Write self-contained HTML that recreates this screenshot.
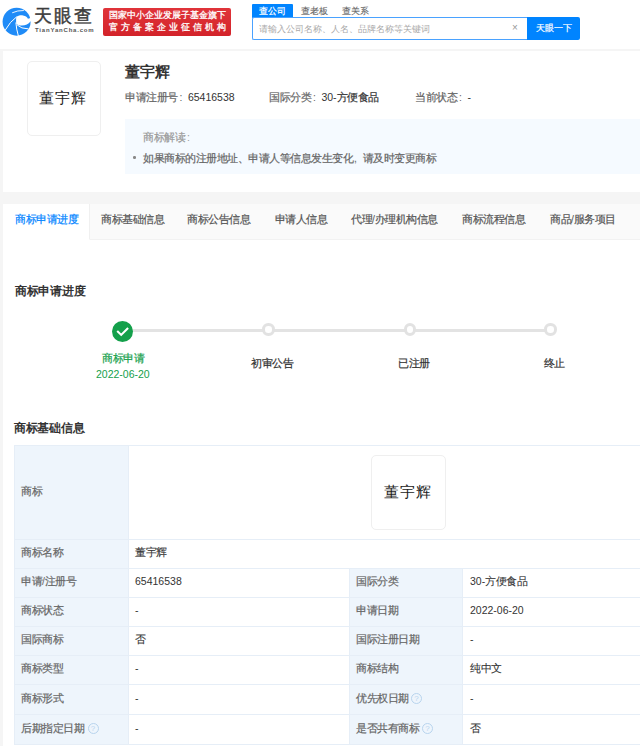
<!DOCTYPE html>
<html><head><meta charset="utf-8">
<style>
*{margin:0;padding:0;box-sizing:border-box}
html,body{width:640px;height:746px;overflow:hidden;background:#f5f5f5;font-family:"Liberation Sans",sans-serif;color:#333}
.abs{position:absolute;white-space:nowrap}
.t{font-size:10.5px;line-height:12px;letter-spacing:-0.5px;-webkit-text-stroke:0.2px currentColor}
.v{-webkit-text-stroke:0.1px currentColor}
.n{letter-spacing:0;-webkit-text-stroke:0}
.h9{font-size:9px;line-height:12px;-webkit-text-stroke:0.2px currentColor}
.bar{position:absolute;background:#e6eef7}
.lab{position:absolute;background:#eef5fc}
</style></head><body>
<!-- header -->
<div class="abs" style="left:0;top:0;width:640px;height:49px;background:#fff"></div>
<svg class="abs" style="left:0;top:0" width="35" height="40" viewBox="0 0 35 40">
  <circle cx="16.6" cy="21.7" r="14" fill="#1f8bf7"/>
  <path d="M16.3,17.2 C17.8,15.5 20.5,15.1 23,15.4 C25.8,15.8 27.6,17 27.9,18.8 L31.5,17.8 L31.8,21.3 L30.4,21.5 C28.6,24.2 25.5,25.6 21.8,25.6 C19.3,25.6 17.4,25 16.3,23.8 C16,21.5 16,19 16.3,17.2 Z" fill="#fff"/>
  <path d="M5.2,30.2 Q10,21.5 16.8,16.7" stroke="#fff" stroke-width="1" fill="none"/>
  <path d="M15.9,22.5 Q16.3,29 18.4,36" stroke="#fff" stroke-width="1" fill="none"/>
  <path d="M17.2,25 Q21,28.8 28.5,28.9" stroke="#fff" stroke-width="1" fill="none"/>
  <path d="M12.2,12.8 Q17.5,10.3 23.8,10.5" stroke="#fff" stroke-width="0.9" fill="none"/>
</svg>
<div class="abs" style="left:34px;top:6px;font-size:17.5px;line-height:20px;color:#3c3c3c;letter-spacing:2.2px;-webkit-text-stroke:0.45px #3c3c3c">天眼查</div>
<div class="abs" style="left:35px;top:27px;font-size:6px;line-height:7px;color:#555;letter-spacing:0.8px;font-weight:bold">TianYanCha.com</div>
<div class="abs" style="left:103px;top:7.5px;width:128px;height:28px;background:linear-gradient(#e0343a,#d3232a);border-radius:2px"></div>
<div class="abs h9" style="left:109px;top:9px;color:#fff;-webkit-text-stroke:0.3px #fff">国家中小企业发展子基金旗下</div>
<div class="abs h9" style="left:109px;top:21px;color:#fff;letter-spacing:3.05px;-webkit-text-stroke:0.3px #fff">官方备案企业征信机构</div>
<div class="abs" style="left:252px;top:4px;width:41px;height:14px;background:#0084ff;border-radius:1px 1px 0 0"></div>
<div class="abs h9" style="left:259px;top:5px;color:#fff">查公司</div>
<div class="abs h9" style="left:301px;top:5px;color:#666;-webkit-text-stroke:0.1px #666">查老板</div>
<div class="abs h9" style="left:342px;top:5px;color:#666;-webkit-text-stroke:0.1px #666">查关系</div>
<div class="abs" style="left:252px;top:17px;width:276px;height:22.5px;border:1px solid #4aa2ff;border-right:none;border-radius:2px 0 0 2px;background:#fff"></div>
<div class="abs h9" style="left:259px;top:22.5px;color:#a9a9a9;-webkit-text-stroke:0">请输入公司名称、人名、品牌名称等关键词</div>
<div class="abs" style="left:512px;top:21px;font-size:10px;line-height:14px;color:#999">×</div>
<div class="abs" style="left:527px;top:17px;width:53px;height:22.5px;background:#0084ff;border-radius:0 2px 2px 0"></div>
<div class="abs h9" style="left:536px;top:22px;color:#fff">天眼一下</div>

<!-- card1 -->
<div class="abs" style="left:3px;top:51px;width:640px;height:141px;background:#fff"></div>
<div class="abs" style="left:27px;top:61px;width:74px;height:75px;border:1px solid #efefef;border-radius:5px;background:#fff"></div>
<div class="abs" style="left:38.5px;top:90px;font-size:14.5px;line-height:17px;color:#222;letter-spacing:1.3px">董宇辉</div>
<div class="abs" style="left:125px;top:64px;font-size:14.5px;line-height:17px;font-weight:bold;color:#333">董宇辉</div>
<div class="abs t" style="left:125px;top:91px;color:#666">申请注册号<span class="n" style="margin:0 5.5px 0 2px">:</span><span class="n" style="color:#333">65416538</span></div>
<div class="abs t" style="left:269px;top:91px;color:#666">国际分类<span class="n" style="margin:0 5.5px 0 2px">:</span><span style="color:#333"><span class="n">30-</span>方便食品</span></div>
<div class="abs t" style="left:415px;top:91px;color:#666">当前状态<span class="n" style="margin:0 5.5px 0 2px">:</span><span class="n" style="color:#333">-</span></div>
<div class="abs" style="left:125px;top:119px;width:520px;height:55px;background:#f5faff"></div>
<div class="abs t" style="left:143px;top:131px;color:#999">商标解读<span class="n" style="margin:0 0 0 2px">:</span></div>
<div class="abs" style="left:133px;top:156px;width:2.5px;height:2.5px;border-radius:50%;background:#888"></div>
<div class="abs t" style="left:143px;top:151.5px;color:#666">如果商标的注册地址、申请人等信息发生变化<span class="n" style="margin:0 6px 0 1px">,</span>请及时变更商标</div>

<!-- card2 -->
<div class="abs" style="left:3px;top:204px;width:640px;height:560px;background:#fff"></div>
<div class="abs" style="left:3px;top:204px;width:640px;height:36px;background:#fafafa;border-bottom:1px solid #f2f2f2"></div>
<div class="abs" style="left:3px;top:204px;width:86.5px;height:36px;background:#fff;border-right:1px solid #f0f0f0;border-bottom:1px solid #fff"></div>
<div class="abs t" style="left:15px;top:213px;color:#0084ff">商标申请进度</div>
<div class="abs t" style="left:101px;top:213px;color:#555">商标基础信息</div>
<div class="abs t" style="left:187px;top:213px;color:#555">商标公告信息</div>
<div class="abs t" style="left:274.5px;top:213px;color:#555">申请人信息</div>
<div class="abs t" style="left:351px;top:213px;color:#555">代理<span class="n">/</span>办理机构信息</div>
<div class="abs t" style="left:462px;top:213px;color:#555">商标流程信息</div>
<div class="abs t" style="left:550px;top:213px;color:#555">商品<span class="n">/</span>服务项目</div>

<div class="abs" style="left:15px;top:283.5px;font-size:11.6px;line-height:14px;font-weight:bold;letter-spacing:-0.3px;color:#333">商标申请进度</div>

<!-- progress -->
<div class="abs" style="left:130px;top:329px;width:421px;height:2.75px;background:#e3e3e3"></div>
<div class="abs" style="left:111.6px;top:320.8px;width:21px;height:21px;border-radius:50%;background:#14a04b"></div>
<svg class="abs" style="left:111.6px;top:320.8px" width="21" height="21" viewBox="0 0 21 21"><path d="M5.2 10.1 L9.2 13.9 L16.1 7" stroke="#fff" stroke-width="2.1" fill="none"/></svg>
<div class="abs" style="left:262.2px;top:323.4px;width:12.5px;height:12.5px;border-radius:50%;background:#fff;border:3.3px solid #e2e2e2"></div>
<div class="abs" style="left:403.5px;top:323.4px;width:12.5px;height:12.5px;border-radius:50%;background:#fff;border:3.3px solid #e2e2e2"></div>
<div class="abs" style="left:544.4px;top:323.4px;width:12.5px;height:12.5px;border-radius:50%;background:#fff;border:3.3px solid #e2e2e2"></div>
<div class="abs t" style="left:102px;top:352px;color:#14a04b">商标申请</div>
<div class="abs t n" style="left:96px;top:368px;color:#14a04b">2022-06-20</div>
<div class="abs t" style="left:251px;top:356.5px;color:#333">初审公告</div>
<div class="abs t" style="left:398px;top:356.5px;color:#333">已注册</div>
<div class="abs t" style="left:543.5px;top:356.5px;color:#333">终止</div>

<div class="abs" style="left:14px;top:420.5px;font-size:11.6px;line-height:14px;font-weight:bold;letter-spacing:-0.3px;color:#333">商标基础信息</div>

<!-- table -->
<div class="lab" style="left:14px;top:445px;width:115px;height:299px"></div>
<div class="lab" style="left:349px;top:568px;width:114px;height:176px"></div>
<!-- horizontal borders -->
<div class="bar" style="left:14px;top:444.5px;width:640px;height:1px"></div>
<div class="bar" style="left:14px;top:538.5px;width:640px;height:1px"></div>
<div class="bar" style="left:14px;top:567.5px;width:640px;height:1px"></div>
<div class="bar" style="left:14px;top:596.5px;width:640px;height:1px"></div>
<div class="bar" style="left:14px;top:625.5px;width:640px;height:1px"></div>
<div class="bar" style="left:14px;top:654.5px;width:640px;height:1px"></div>
<div class="bar" style="left:14px;top:683.5px;width:640px;height:1px"></div>
<div class="bar" style="left:14px;top:713.5px;width:640px;height:1px"></div>
<div class="bar" style="left:14px;top:743.5px;width:640px;height:1px"></div>
<!-- vertical borders -->
<div class="bar" style="left:13.5px;top:445px;width:1px;height:299px"></div>
<div class="bar" style="left:128px;top:445px;width:1px;height:299px"></div>
<div class="bar" style="left:348.5px;top:568px;width:1px;height:176px"></div>
<div class="bar" style="left:462px;top:568px;width:1px;height:176px"></div>

<div class="abs t" style="left:21px;top:485px;color:#666">商标</div>
<div class="abs" style="left:371px;top:455px;width:75px;height:75px;border:1px solid #efefef;border-radius:5px;background:#fff"></div>
<div class="abs" style="left:383.5px;top:484px;font-size:14.5px;line-height:17px;color:#222;letter-spacing:1.3px">董宇辉</div>

<div class="abs t" style="left:21px;top:546px;color:#666">商标名称</div>
<div class="abs t v" style="left:135px;top:546px;color:#333">董宇辉</div>

<div class="abs t" style="left:21px;top:575px;color:#666">申请<span class="n">/</span>注册号</div>
<div class="abs t v n" style="left:135px;top:575px;color:#333">65416538</div>
<div class="abs t" style="left:356px;top:575px;color:#666">国际分类</div>
<div class="abs t v" style="left:470px;top:575px;color:#333"><span class="n">30-</span>方便食品</div>

<div class="abs t" style="left:21px;top:604px;color:#666">商标状态</div>
<div class="abs t v n" style="left:135px;top:604px;color:#333">-</div>
<div class="abs t" style="left:356px;top:604px;color:#666">申请日期</div>
<div class="abs t v n" style="left:470px;top:604px;color:#333">2022-06-20</div>

<div class="abs t" style="left:21px;top:633px;color:#666">国际商标</div>
<div class="abs t v" style="left:135px;top:633px;color:#333">否</div>
<div class="abs t" style="left:356px;top:633px;color:#666">国际注册日期</div>
<div class="abs t v n" style="left:470px;top:633px;color:#333">-</div>

<div class="abs t" style="left:21px;top:662px;color:#666">商标类型</div>
<div class="abs t v n" style="left:135px;top:662px;color:#333">-</div>
<div class="abs t" style="left:356px;top:662px;color:#666">商标结构</div>
<div class="abs t v" style="left:470px;top:662px;color:#333">纯中文</div>

<div class="abs t" style="left:21px;top:692px;color:#666">商标形式</div>
<div class="abs t v n" style="left:135px;top:692px;color:#333">-</div>
<div class="abs t" style="left:356px;top:692px;color:#666">优先权日期</div>
<div class="abs" style="left:411px;top:693px;width:11px;height:11px;border:1px solid #b8d4ee;border-radius:50%;font-size:8px;line-height:9px;text-align:center;color:#b8d4ee">?</div>
<div class="abs t v n" style="left:470px;top:692px;color:#333">-</div>

<div class="abs t" style="left:21px;top:722px;color:#666">后期指定日期</div>
<div class="abs" style="left:87.5px;top:723px;width:11px;height:11px;border:1px solid #b8d4ee;border-radius:50%;font-size:8px;line-height:9px;text-align:center;color:#b8d4ee">?</div>
<div class="abs t v n" style="left:135px;top:722px;color:#333">-</div>
<div class="abs t" style="left:356px;top:722px;color:#666">是否共有商标</div>
<div class="abs" style="left:422px;top:723px;width:11px;height:11px;border:1px solid #b8d4ee;border-radius:50%;font-size:8px;line-height:9px;text-align:center;color:#b8d4ee">?</div>
<div class="abs t v" style="left:470px;top:722px;color:#333">否</div>
</body></html>
